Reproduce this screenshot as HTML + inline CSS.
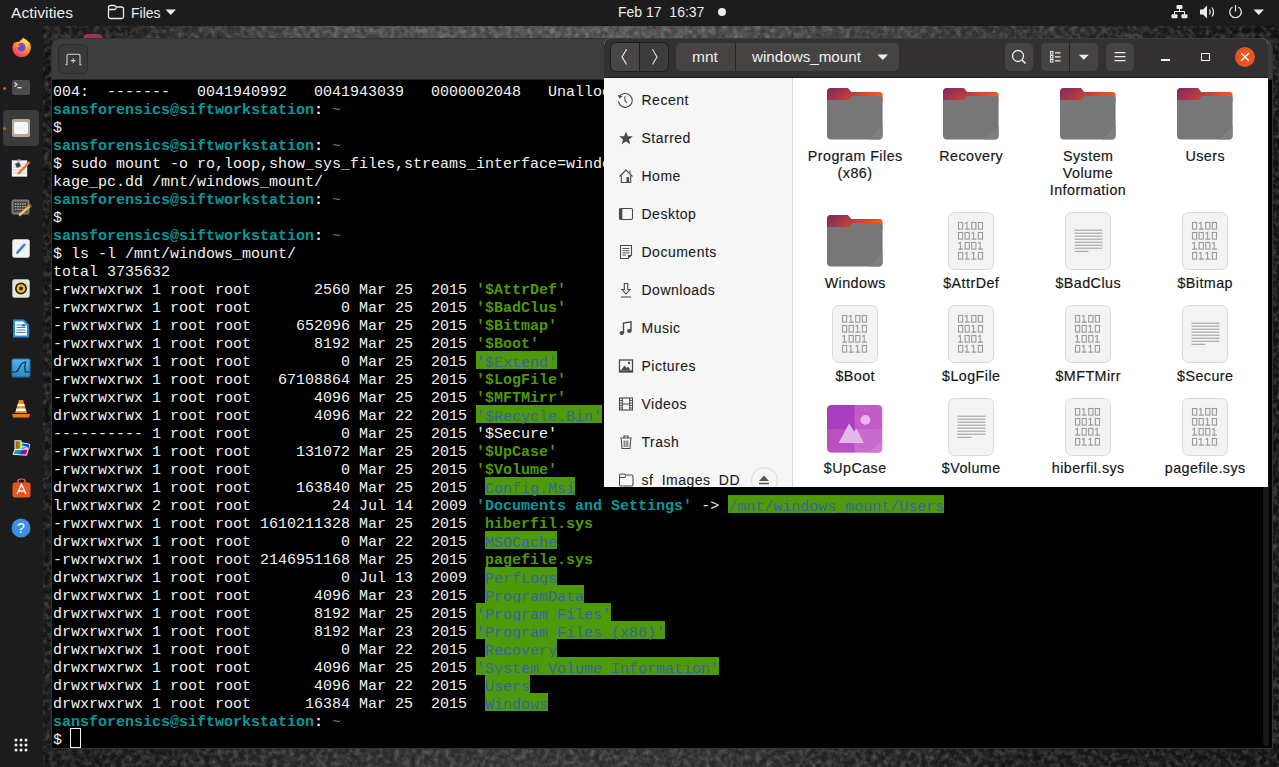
<!DOCTYPE html>
<html><head><meta charset="utf-8">
<style>
*{margin:0;padding:0;box-sizing:border-box}
html,body{width:1279px;height:767px;overflow:hidden;background:#1a1a1a;font-family:"Liberation Sans",sans-serif}
.abs{position:absolute}
#wall{left:0;top:0;width:1279px;height:767px;background:#1a1a1a}
#topbar{left:0;top:0;width:1279px;height:26px;background:#1c1c1c;color:#ececec;font-size:14.5px}
#dock{left:0;top:26px;width:43px;height:741px;background:#1c1c1c}
#term{left:52px;top:39px;width:1220px;height:709px;background:#000;border-radius:7px 7px 0 0;overflow:hidden;box-shadow:0 0 0 1px #333}
#thead{left:0;top:0;width:1220px;height:41px;background:#3d3d3d;border-bottom:1px solid #252525}
#tbody{left:0;top:41px;width:1220px;height:668px;background:#000}
pre{font-family:"Liberation Mono",monospace;font-size:15px;line-height:18px;color:#f2f2f2;white-space:pre}
.c{color:#06989a;font-weight:bold}
.w{color:#f2f2f2;font-weight:bold}
.g{color:#4e9a06;font-weight:bold}
.gt{color:#4e9a06}
.h{color:#3465a4;background:linear-gradient(#4e9a06,#4e9a06) no-repeat 0 0/100% 18px;padding-top:3.5px}
#files{left:604px;top:38px;width:664px;height:449px;border-radius:7px 7px 0 0;overflow:hidden;background:#fff}
#fhead{left:0;top:0;width:664px;height:40px;background:#323030;border-bottom:1px solid #1c1a1a;box-shadow:inset 0 1px 0 #3e3c3c}
#side{left:0;top:40px;width:189px;height:409px;background:#f6f6f6;border-right:1px solid #d8d8d8}
.lbl{position:absolute;width:120px;text-align:center;font-size:14.3px;line-height:17px;color:#161616;letter-spacing:0.45px;text-indent:0.45px;-webkit-text-stroke:0.18px #161616}
.btn{position:absolute;background:#464544;border-radius:5px}
</style></head><body>
<div id="wall" class="abs">
  <div class="abs" style="left:0;top:26px;width:1279px;height:14px;background:linear-gradient(90deg,#1a1a1a 0px,#1c1c1c 110px,#333 190px,#4a4a4a 300px,#525252 450px,#555 650px,#4a4a4a 800px,#3a3a3a 950px,#2c2c2c 1080px,#1c1c1c 1180px,#121212 1279px)"></div>
  <div class="abs" style="left:0;top:40px;width:1279px;height:727px;background:linear-gradient(180deg,#131313 0%,#161616 60%,#1a1a1a 100%)"></div>
  <div class="abs" style="left:0;top:744px;width:1279px;height:23px;background:linear-gradient(90deg,#161616 0px,#1d1d1d 150px,#2c2c2c 300px,#353535 480px,#333 700px,#262626 850px,#1c1c1c 1000px,#141414 1279px)"></div>
  <div class="abs" style="left:1268px;top:40px;width:11px;height:710px;background:#151515"></div>
  <svg class="abs" style="left:0;top:0" width="1279" height="767"><filter id="nz" x="0" y="0" width="100%" height="100%"><feTurbulence type="fractalNoise" baseFrequency="0.18" numOctaves="3" seed="3"/><feColorMatrix values="0 0 0 0 1  0 0 0 0 1  0 0 0 0 1  0 0 0 0.45 -0.17"/></filter><filter id="nz2" x="0" y="0" width="100%" height="100%"><feTurbulence type="fractalNoise" baseFrequency="0.2" numOctaves="2" seed="9"/><feColorMatrix values="0 0 0 0 0  0 0 0 0 0  0 0 0 0 0  0 0 0 0.6 -0.22"/></filter><rect width="1279" height="767" filter="url(#nz)"/><rect width="1279" height="767" filter="url(#nz2)"/></svg>
</div>
<div class="abs" style="left:83px;top:34px;width:20px;height:8px;border-radius:5px 5px 0 0;background:#a2324e"></div>
<div id="topbar" class="abs">
  <div class="abs" style="left:11px;top:4px;font-size:15.5px;letter-spacing:0.1px">Activities</div>
  <svg class="abs" style="left:107px;top:4px" width="18" height="16" viewBox="0 0 18 16"><path d="M1.5 3.5 Q1.5 1.5 3.5 1.5 H7 Q8.5 1.5 9 3 H14.5 Q16.5 3 16.5 5 V13 Q16.5 14.5 14.5 14.5 H3.5 Q1.5 14.5 1.5 12.5 Z M1.5 5.5 H7.5 Q9 5.5 9 4" fill="none" stroke="#ececec" stroke-width="1.3"/></svg>
  <div class="abs" style="left:131px;top:5px;font-size:14px">Files</div>
  <svg class="abs" style="left:165px;top:9px" width="12" height="7" viewBox="0 0 12 7"><path d="M0.5 0.5 H11 L5.75 6 Z" fill="#ececec"/></svg>
  <div class="abs" style="left:618px;top:4px;font-size:14px;white-space:pre">Feb 17  16:37</div>
  <div class="abs" style="left:718px;top:8px;width:8px;height:8px;border-radius:50%;background:#ececec"></div>
  <svg class="abs" style="left:1171px;top:5px" width="17" height="14" viewBox="0 0 17 14"><rect x="5.5" y="0" width="6" height="4" rx="1" fill="#ececec"/><rect x="0.5" y="9.3" width="6" height="4" rx="1" fill="#ececec"/><rect x="10.5" y="9.3" width="6" height="4" rx="1" fill="#ececec"/><path d="M8.5 4 V6.5 M3.5 9.5 V6.5 H13.5 V9.5" fill="none" stroke="#ececec" stroke-width="1"/></svg>
  <svg class="abs" style="left:1200px;top:5px" width="16" height="14" viewBox="0 0 16 14"><path d="M0 4.5 H3 L7 0.5 V13.5 L3 9.5 H0 Z" fill="#ececec"/><path d="M9.5 4.5 Q11 7 9.5 9.5 M12 2.5 Q15 7 12 11.5" fill="none" stroke="#ececec" stroke-width="1.2"/></svg>
  <svg class="abs" style="left:1228px;top:4px" width="15" height="15" viewBox="0 0 15 15"><path d="M4.5 3 A5.8 5.8 0 1 0 10.5 3" fill="none" stroke="#ececec" stroke-width="1.2"/><path d="M7.5 1 V7.5" stroke="#ececec" stroke-width="1.2"/></svg>
  <svg class="abs" style="left:1253px;top:9px" width="12" height="7" viewBox="0 0 12 7"><path d="M0.5 0.5 H11 L5.75 6 Z" fill="#ececec"/></svg>
</div>
<div id="dock" class="abs">
  <svg class="abs" style="left:11px;top:11px" width="21" height="21" viewBox="0 0 21 21">
    <defs><radialGradient id="ff" cx="0.7" cy="0.2" r="1"><stop offset="0" stop-color="#ffe84a"/><stop offset="0.45" stop-color="#ff9a1f"/><stop offset="0.8" stop-color="#ff3a5c"/><stop offset="1" stop-color="#e0208a"/></radialGradient></defs>
    <path d="M10.5 20.2 A9.3 9.3 0 0 1 1.5 9 Q2.5 6 4 4.5 L4.5 6 Q6 4 7.5 5 Q9.5 3.5 11 2 Q12 1 12 0.5 Q16 3 19 6 Q20.5 10 19.5 13 A9.3 9.3 0 0 1 10.5 20.2 Z" fill="url(#ff)"/>
    <circle cx="10.5" cy="10.5" r="4" fill="#6a4ae0"/><path d="M7 8 Q9 5 12 6 Q14 7 13.5 9" fill="#a23ae0"/>
    <path d="M4 6 Q6 8 9 9 Q8 10.5 6 10 Q4.5 9 4 6Z" fill="#ff9a1f"/>
  </svg>
  <div class="abs" style="left:3px;top:61px;width:3px;height:3px;border-radius:50%;background:#e95420"></div>
  <div class="abs" style="left:12px;top:54px;width:18px;height:15px;border-radius:2px;background:#4b4b4b"></div>
  <svg class="abs" style="left:12px;top:54px" width="18" height="15" viewBox="0 0 18 15"><path d="M2.5 2.5 L5 4.5 L2.5 6.5" fill="none" stroke="#eee" stroke-width="1.1"/><path d="M5.5 7.7 H9.5" stroke="#eee" stroke-width="1.3"/></svg>
  <div class="abs" style="left:3px;top:84px;width:36px;height:36px;border-radius:4px;background:#3c3c3c"></div>
  <div class="abs" style="left:3px;top:101px;width:3px;height:3px;border-radius:50%;background:#e95420"></div>
  <div class="abs" style="left:12px;top:93px;width:18px;height:18px;border-radius:2px;background:#b5ab97"></div>
  <div class="abs" style="left:14px;top:96px;width:14px;height:12px;border-radius:2px;background:#f6f6f4"></div>
  <!-- notes -->
  <svg class="abs" style="left:11px;top:133px" width="20" height="19" viewBox="0 0 20 19"><rect x="1" y="1.5" width="15" height="16" fill="#f8f8ff" stroke="#ccc" stroke-width="0.5"/><path d="M2 5 H15 M2 8 H15 M2 11 H15 M2 14 H15" stroke="#b8b8f0" stroke-width="0.8"/><rect x="6" y="0.5" width="4" height="2" fill="#aaa"/><path d="M4 5 L8 3 L10 7 L6 9Z" fill="#444"/><path d="M7 15 L18.5 3" stroke="#f07a1a" stroke-width="2.5"/></svg>
  <!-- keyboard pencil -->
  <svg class="abs" style="left:11px;top:173px" width="21" height="18" viewBox="0 0 21 18"><rect x="1" y="1" width="17" height="14" rx="1.5" fill="#6a6864" stroke="#9a9894" stroke-width="0.8"/><rect x="2.8" y="3" width="13.4" height="9.5" fill="#3a3936"/><path d="M3.8 5 H15 M3.8 7.7 H15 M3.8 10.4 H15" stroke="#b9b7b0" stroke-width="1.3" stroke-dasharray="1.6 0.8"/><path d="M8 16.5 L19.5 6.5" stroke="#e8c44a" stroke-width="2.5"/><path d="M18.5 7.5 L20 6" stroke="#d44" stroke-width="2.5"/></svg>
  <!-- text editor -->
  <svg class="abs" style="left:12px;top:213px" width="18" height="19" viewBox="0 0 18 19"><rect x="0.5" y="0.5" width="17" height="18" rx="2" fill="#f4f4f4" stroke="#ddd" stroke-width="0.6"/><path d="M5 14 L13 5" stroke="#3b78e7" stroke-width="2.6"/><path d="M4 15.3 L5.2 13.3 L6.2 14.3Z" fill="#555"/></svg>
  <!-- rhythmbox -->
  <svg class="abs" style="left:12px;top:253px" width="18" height="19" viewBox="0 0 18 19"><rect x="0.5" y="0.5" width="17" height="18" rx="2" fill="#e8e4d8" stroke="#c9c4b4" stroke-width="0.6"/><circle cx="9" cy="9.5" r="6" fill="#222"/><circle cx="9" cy="9.5" r="4.3" fill="#f2c21a"/><circle cx="9" cy="9.5" r="2" fill="#222"/></svg>
  <!-- libreoffice writer -->
  <svg class="abs" style="left:12px;top:293px" width="18" height="19" viewBox="0 0 18 19"><path d="M1 0.5 H12 L17 5.5 V18.5 H1Z" fill="#2a8ad4"/><path d="M3 2.5 H11 L15 6.5 V16.5 H3Z" fill="#fff"/><path d="M4.5 6 H9 M4.5 8.5 H13.5 M4.5 11 H13.5 M4.5 13.5 H13.5" stroke="#2a8ad4" stroke-width="1"/><rect x="9.5" y="5" width="4" height="2.5" fill="#2a8ad4"/></svg>
  <!-- wireshark -->
  <svg class="abs" style="left:11px;top:332px" width="20" height="20" viewBox="0 0 20 20"><defs><linearGradient id="ws" x1="0" y1="0" x2="0" y2="1"><stop offset="0" stop-color="#5ab4ea"/><stop offset="1" stop-color="#2a86c8"/></linearGradient></defs><rect x="0.8" y="0.8" width="18.4" height="18.4" rx="1.5" fill="url(#ws)" stroke="#16507a" stroke-width="1"/><path d="M1 14 H4.5 Q6.5 14 8.3 9.5 Q10.5 4.3 14.5 4 Q13.3 8.5 14.3 14 H19" fill="none" stroke="#0f2a40" stroke-width="1.2"/></svg>
  <!-- vlc -->
  <svg class="abs" style="left:11px;top:373px" width="20" height="19" viewBox="0 0 20 19"><path d="M8 1 H12 L16 14 H4Z" fill="#f88a14"/><path d="M6.8 5 H13.2 L13.9 7.3 H6.1Z M5.6 9.5 H14.4 L15.2 12 H4.8Z" fill="#fff"/><path d="M1 15 H19 L18 18.5 H2Z" fill="#f07a10"/></svg>
  <!-- colorful -->
  <svg class="abs" style="left:8px;top:410px" width="28" height="24" viewBox="0 0 28 24"><defs><linearGradient id="rb1" x1="0" y1="0" x2="1" y2="0"><stop offset="0" stop-color="#ff2a00"/><stop offset="1" stop-color="#20e020"/></linearGradient><linearGradient id="rb2" x1="0" y1="0" x2="1" y2="0.3"><stop offset="0" stop-color="#10e020"/><stop offset="0.5" stop-color="#1090c0"/><stop offset="0.75" stop-color="#6010e0"/><stop offset="1" stop-color="#ff1040"/></linearGradient><linearGradient id="rb3" x1="0" y1="0" x2="1" y2="0"><stop offset="0" stop-color="#20d020"/><stop offset="0.5" stop-color="#1040ff"/><stop offset="1" stop-color="#2010ff"/></linearGradient></defs>
  <path d="M13 6.5 L21.8 8.3 L20.8 13 L13 11.6Z" fill="url(#rb3)" stroke="#eee" stroke-width="0.9"/><path d="M13.5 10 L19.5 11.3" stroke="#ddd" stroke-width="1.2"/>
  <rect x="7" y="4.8" width="6" height="8.6" fill="url(#rb1)" stroke="#f4f4f4" stroke-width="1"/>
  <path d="M5 18.3 L6.8 13.6 L20.2 13.1 L18.6 19.2Z" fill="url(#rb2)" stroke="#f4f4f4" stroke-width="1"/></svg>
  <!-- software -->
  <svg class="abs" style="left:12px;top:452px" width="19" height="20" viewBox="0 0 19 20"><path d="M6 5 V3 Q6 1 9.5 1 Q13 1 13 3 V5" fill="none" stroke="#f08050" stroke-width="1.2"/><rect x="0.5" y="4.5" width="18" height="15" rx="2" fill="#e95420"/><path d="M5 16 L9.5 6.5 L14 16 M6.5 13 H12.5" fill="none" stroke="#fff" stroke-width="1.4"/></svg>
  <!-- help -->
  <svg class="abs" style="left:11px;top:492px" width="20" height="20" viewBox="0 0 20 20"><circle cx="10" cy="10" r="9.5" fill="#3d8fe0"/><text x="10" y="15" text-anchor="middle" font-family="Liberation Sans" font-size="14" fill="#fff">?</text></svg>
  <!-- apps grid -->
  <svg class="abs" style="left:14px;top:712px" width="14" height="14" viewBox="0 0 14 14" fill="#eee"><circle cx="2" cy="2" r="1.5"/><circle cx="7" cy="2" r="1.5"/><circle cx="12" cy="2" r="1.5"/><circle cx="2" cy="7" r="1.5"/><circle cx="7" cy="7" r="1.5"/><circle cx="12" cy="7" r="1.5"/><circle cx="2" cy="12" r="1.5"/><circle cx="7" cy="12" r="1.5"/><circle cx="12" cy="12" r="1.5"/></svg>
</div>
<div id="term" class="abs">
  <div id="thead" class="abs">
    <div class="abs" style="left:6px;top:5px;width:30px;height:30px;border-radius:6px;background:#393939;border:1px solid #2b2b2b"></div>
    <svg class="abs" style="left:6px;top:5px" width="29" height="29" viewBox="0 0 29 29"><path d="M7.5 20.7 H9 V11.8 Q9 10.2 10.6 10.2 H20.4 Q22 10.2 22 11.8 V20.7 H23.5" fill="none" stroke="#cfcfcf" stroke-width="1.1"/><path d="M15.3 14.3 V18.9 M13 16.6 H17.6" stroke="#cfcfcf" stroke-width="1.1"/></svg>
  </div>
  <div id="tbody" class="abs">
<div class="abs" style="left:1211px;top:2px;width:6px;height:664px;border-radius:3px;background:#171717"></div>
<pre class="abs" style="left:1px;top:4px">004:  -------   0041940992   0041943039   0000002048   Unallocated
<span class="c">sansforensics@siftworkstation</span><span class="w">:</span> <span class="gt">~</span>
$
<span class="c">sansforensics@siftworkstation</span><span class="w">:</span> <span class="gt">~</span>
$ sudo mount -o ro,loop,show_sys_files,streams_interface=windows /cases/hac
kage_pc.dd /mnt/windows_mount/
<span class="c">sansforensics@siftworkstation</span><span class="w">:</span> <span class="gt">~</span>
$
<span class="c">sansforensics@siftworkstation</span><span class="w">:</span> <span class="gt">~</span>
$ ls -l /mnt/windows_mount/
total 3735632
-rwxrwxrwx 1 root root       2560 Mar 25  2015 <span class="g">'$AttrDef'</span>
-rwxrwxrwx 1 root root          0 Mar 25  2015 <span class="g">'$BadClus'</span>
-rwxrwxrwx 1 root root     652096 Mar 25  2015 <span class="g">'$Bitmap'</span>
-rwxrwxrwx 1 root root       8192 Mar 25  2015 <span class="g">'$Boot'</span>
drwxrwxrwx 1 root root          0 Mar 25  2015 <span class="h">'$Extend'</span>
-rwxrwxrwx 1 root root   67108864 Mar 25  2015 <span class="g">'$LogFile'</span>
-rwxrwxrwx 1 root root       4096 Mar 25  2015 <span class="g">'$MFTMirr'</span>
drwxrwxrwx 1 root root       4096 Mar 22  2015 <span class="h">'$Recycle.Bin'</span>
---------- 1 root root          0 Mar 25  2015 '$Secure'
-rwxrwxrwx 1 root root     131072 Mar 25  2015 <span class="g">'$UpCase'</span>
-rwxrwxrwx 1 root root          0 Mar 25  2015 <span class="g">'$Volume'</span>
drwxrwxrwx 1 root root     163840 Mar 25  2015  <span class="h">Config.Msi</span>
lrwxrwxrwx 2 root root         24 Jul 14  2009 <span class="c">'Documents and Settings'</span> -&gt; <span class="h">/mnt/windows_mount/Users</span>
-rwxrwxrwx 1 root root 1610211328 Mar 25  2015  <span class="g">hiberfil.sys</span>
drwxrwxrwx 1 root root          0 Mar 22  2015  <span class="h">MSOCache</span>
-rwxrwxrwx 1 root root 2146951168 Mar 25  2015  <span class="g">pagefile.sys</span>
drwxrwxrwx 1 root root          0 Jul 13  2009  <span class="h">PerfLogs</span>
drwxrwxrwx 1 root root       4096 Mar 23  2015  <span class="h">ProgramData</span>
drwxrwxrwx 1 root root       8192 Mar 25  2015 <span class="h">'Program Files'</span>
drwxrwxrwx 1 root root       8192 Mar 23  2015 <span class="h">'Program Files (x86)'</span>
drwxrwxrwx 1 root root          0 Mar 22  2015  <span class="h">Recovery</span>
drwxrwxrwx 1 root root       4096 Mar 25  2015 <span class="h">'System Volume Information'</span>
drwxrwxrwx 1 root root       4096 Mar 22  2015  <span class="h">Users</span>
drwxrwxrwx 1 root root      16384 Mar 25  2015  <span class="h">Windows</span>
<span class="c">sansforensics@siftworkstation</span><span class="w">:</span> <span class="gt">~</span>
$ </pre>
<div class="abs" style="left:18px;top:648px;width:11px;height:20px;border:1.5px solid #f4f4f4"></div>
  </div>
</div>
<div id="files" class="abs">
  <div id="fhead" class="abs">
    <div class="abs" style="left:6px;top:4px;width:59px;height:30px;border-radius:6px;background:#1f1e1e"></div>
    <div class="abs" style="left:7px;top:5px;width:28px;height:28px;border-radius:5px 0 0 5px;background:#494746"></div>
    <div class="abs" style="left:36px;top:5px;width:28px;height:28px;border-radius:0 5px 5px 0;background:#3d3b3b"></div>
    <svg class="abs" style="left:7px;top:5px" width="57" height="28" viewBox="0 0 57 28"><path d="M15.6 6.3 L11 13.9 L15.6 21.5" fill="none" stroke="#eee" stroke-width="1.1"/><path d="M41.5 6.3 L46 13.9 L41.5 21.5" fill="none" stroke="#ddd" stroke-width="1.1"/></svg>
    <div class="abs" style="left:131px;top:5px;width:1px;height:28px;background:#262424"></div>
    <div class="abs" style="left:72px;top:5px;width:59px;height:28px;border-radius:5px 0 0 5px;background:#464443"></div>
    <div class="abs" style="left:132px;top:5px;width:163px;height:28px;border-radius:0 5px 5px 0;background:#464443"></div>
    <div class="abs" style="left:88px;top:10px;font-size:15.5px;color:#f0f0f0">mnt</div>
    <div class="abs" style="left:148px;top:10px;font-size:15.2px;color:#f0f0f0">windows_mount</div>
    <svg class="abs" style="left:273px;top:16px" width="12" height="7" viewBox="0 0 12 7"><path d="M0.5 0.5 H11 L5.75 6 Z" fill="#eee"/></svg>
    
    <div class="abs" style="left:401px;top:5px;width:28px;height:28px;border-radius:5px;background:#464443"></div>
    <svg class="abs" style="left:401px;top:5px" width="28" height="28" viewBox="0 0 28 28"><circle cx="13" cy="13" r="5.5" fill="none" stroke="#eee" stroke-width="1.3"/><path d="M17 17 L20.5 20.5" stroke="#eee" stroke-width="1.6"/></svg>
    
    <div class="abs" style="left:437px;top:5px;width:28px;height:28px;border-radius:5px 0 0 5px;background:#464443"></div>
    <div class="abs" style="left:466px;top:5px;width:28px;height:28px;border-radius:0 5px 5px 0;background:#464443"></div><div class="abs" style="left:465px;top:5px;width:1px;height:28px;background:#262424"></div>
    <svg class="abs" style="left:437px;top:5px" width="57" height="28" viewBox="0 0 57 28"><rect x="9.5" y="8.5" width="2.5" height="2.5" fill="none" stroke="#eee" stroke-width="1"/><rect x="9.5" y="12.5" width="2.5" height="2.5" fill="none" stroke="#eee" stroke-width="1"/><rect x="9.5" y="16.5" width="2.5" height="2.5" fill="none" stroke="#eee" stroke-width="1"/><path d="M14 9.8 H19.5 M14 13.8 H19.5 M14 17.8 H19.5" stroke="#eee" stroke-width="1.2"/><path d="M37.8 11.8 H47.8 L42.8 16.8Z" fill="#eee"/></svg>
    
    <div class="abs" style="left:502px;top:5px;width:28px;height:28px;border-radius:5px;background:#464443"></div>
    <svg class="abs" style="left:502px;top:5px" width="28" height="28" viewBox="0 0 28 28"><path d="M8.5 9.6 H19.5 M8.5 13.6 H19.5 M8.5 17.6 H19.5" stroke="#eee" stroke-width="1.2"/></svg>
    <div class="abs" style="left:557px;top:20.5px;width:8.5px;height:2px;background:#f2f2f2"></div>
    <div class="abs" style="left:597px;top:14.7px;width:8.5px;height:8.5px;border:1.3px solid #f2f2f2"></div>
    <div class="abs" style="left:631px;top:9px;width:20px;height:20px;border-radius:50%;background:#e95420"></div>
    <svg class="abs" style="left:631px;top:9px" width="20" height="20" viewBox="0 0 20 20"><path d="M6.2 6.2 L13.8 13.8 M13.8 6.2 L6.2 13.8" stroke="#fff" stroke-width="1.4"/></svg>
  </div>
  <div id="grid">
<svg width="0" height="0" style="position:absolute"><defs><linearGradient id="fg" x1="0" y1="0" x2="1" y2="0.35"><stop offset="0" stop-color="#7a2a62"/><stop offset="0.45" stop-color="#b13a45"/><stop offset="1" stop-color="#ee5a1e"/></linearGradient></defs></svg>
<svg class="abs" style="left:223.0px;top:50.0px" width="57" height="53" viewBox="0 0 57 53"><path d="M0 3.5 Q0 0 3.5 0 H21 L24.3 3.9 H52.3 Q55.6 3.9 55.6 7.2 V14 H0 Z" fill="url(#fg)"/><path d="M0 12 H22 L24.7 8.1 H52.6 Q55.6 8.1 55.6 11.1 V47.5 Q55.6 51.5 51.6 51.5 H4 Q0 51.5 0 47.5 Z" fill="#777"/><path d="M55.6 38 V47.5 Q55.6 51.5 51.6 51.5 H42Z" fill="#7f7f7f"/></svg>
<div class="lbl" style="left:191.0px;top:110.3px">Program Files<br>(x86)</div>
<svg class="abs" style="left:339.0px;top:50.0px" width="57" height="53" viewBox="0 0 57 53"><path d="M0 3.5 Q0 0 3.5 0 H21 L24.3 3.9 H52.3 Q55.6 3.9 55.6 7.2 V14 H0 Z" fill="url(#fg)"/><path d="M0 12 H22 L24.7 8.1 H52.6 Q55.6 8.1 55.6 11.1 V47.5 Q55.6 51.5 51.6 51.5 H4 Q0 51.5 0 47.5 Z" fill="#777"/><path d="M55.6 38 V47.5 Q55.6 51.5 51.6 51.5 H42Z" fill="#7f7f7f"/></svg>
<div class="lbl" style="left:307.0px;top:110.3px">Recovery</div>
<svg class="abs" style="left:456.0px;top:50.0px" width="57" height="53" viewBox="0 0 57 53"><path d="M0 3.5 Q0 0 3.5 0 H21 L24.3 3.9 H52.3 Q55.6 3.9 55.6 7.2 V14 H0 Z" fill="url(#fg)"/><path d="M0 12 H22 L24.7 8.1 H52.6 Q55.6 8.1 55.6 11.1 V47.5 Q55.6 51.5 51.6 51.5 H4 Q0 51.5 0 47.5 Z" fill="#777"/><path d="M55.6 38 V47.5 Q55.6 51.5 51.6 51.5 H42Z" fill="#7f7f7f"/></svg>
<div class="lbl" style="left:424.0px;top:110.3px">System<br>Volume<br>Information</div>
<svg class="abs" style="left:573.0px;top:50.0px" width="57" height="53" viewBox="0 0 57 53"><path d="M0 3.5 Q0 0 3.5 0 H21 L24.3 3.9 H52.3 Q55.6 3.9 55.6 7.2 V14 H0 Z" fill="url(#fg)"/><path d="M0 12 H22 L24.7 8.1 H52.6 Q55.6 8.1 55.6 11.1 V47.5 Q55.6 51.5 51.6 51.5 H4 Q0 51.5 0 47.5 Z" fill="#777"/><path d="M55.6 38 V47.5 Q55.6 51.5 51.6 51.5 H42Z" fill="#7f7f7f"/></svg>
<div class="lbl" style="left:541.0px;top:110.3px">Users</div>
<svg class="abs" style="left:223.0px;top:176.9px" width="57" height="53" viewBox="0 0 57 53"><path d="M0 3.5 Q0 0 3.5 0 H21 L24.3 3.9 H52.3 Q55.6 3.9 55.6 7.2 V14 H0 Z" fill="url(#fg)"/><path d="M0 12 H22 L24.7 8.1 H52.6 Q55.6 8.1 55.6 11.1 V47.5 Q55.6 51.5 51.6 51.5 H4 Q0 51.5 0 47.5 Z" fill="#777"/><path d="M55.6 38 V47.5 Q55.6 51.5 51.6 51.5 H42Z" fill="#7f7f7f"/></svg>
<div class="lbl" style="left:191.0px;top:237.2px">Windows</div>
<svg class="abs" style="left:344.4px;top:174.1px" width="46" height="58" viewBox="0 0 46 58"><rect x="0.5" y="0.5" width="45" height="57" rx="6" fill="#f3f3f3" stroke="#d9d9d9"/><rect x="10.5" y="10.5" width="4.2" height="6.6" fill="none" stroke="#9a9a9a" stroke-width="1.1"/><path d="M16.9 11.6 L19.0 10.5 V17.1 M16.9 17.1 H21.8" fill="none" stroke="#9a9a9a" stroke-width="1.1"/><rect x="23.7" y="10.5" width="4.2" height="6.6" fill="none" stroke="#9a9a9a" stroke-width="1.1"/><rect x="30.3" y="10.5" width="4.2" height="6.6" fill="none" stroke="#9a9a9a" stroke-width="1.1"/><rect x="10.5" y="20.5" width="4.2" height="6.6" fill="none" stroke="#9a9a9a" stroke-width="1.1"/><rect x="17.1" y="20.5" width="4.2" height="6.6" fill="none" stroke="#9a9a9a" stroke-width="1.1"/><path d="M23.5 21.6 L25.6 20.5 V27.1 M23.5 27.1 H28.4" fill="none" stroke="#9a9a9a" stroke-width="1.1"/><rect x="30.3" y="20.5" width="4.2" height="6.6" fill="none" stroke="#9a9a9a" stroke-width="1.1"/><path d="M10.3 31.6 L12.4 30.5 V37.1 M10.3 37.1 H15.2" fill="none" stroke="#9a9a9a" stroke-width="1.1"/><rect x="17.1" y="30.5" width="4.2" height="6.6" fill="none" stroke="#9a9a9a" stroke-width="1.1"/><rect x="23.7" y="30.5" width="4.2" height="6.6" fill="none" stroke="#9a9a9a" stroke-width="1.1"/><path d="M30.1 31.6 L32.2 30.5 V37.1 M30.1 37.1 H35.0" fill="none" stroke="#9a9a9a" stroke-width="1.1"/><rect x="10.5" y="40.5" width="4.2" height="6.6" fill="none" stroke="#9a9a9a" stroke-width="1.1"/><path d="M16.9 41.6 L19.0 40.5 V47.1 M16.9 47.1 H21.8" fill="none" stroke="#9a9a9a" stroke-width="1.1"/><path d="M23.5 41.6 L25.6 40.5 V47.1 M23.5 47.1 H28.4" fill="none" stroke="#9a9a9a" stroke-width="1.1"/><rect x="30.3" y="40.5" width="4.2" height="6.6" fill="none" stroke="#9a9a9a" stroke-width="1.1"/></svg>
<div class="lbl" style="left:307.0px;top:237.2px">$AttrDef</div>
<svg class="abs" style="left:461.4px;top:174.1px" width="46" height="58" viewBox="0 0 46 58"><rect x="0.5" y="0.5" width="45" height="57" rx="6" fill="#f3f3f3" stroke="#d9d9d9"/><path d="M9.5 18.2 H37.5" stroke="#9c9c9c" stroke-width="1"/><path d="M9.5 21.2 H37.5" stroke="#9c9c9c" stroke-width="1"/><path d="M9.5 24.2 H37.5" stroke="#9c9c9c" stroke-width="1"/><path d="M9.5 27.2 H37.5" stroke="#9c9c9c" stroke-width="1"/><path d="M9.5 30.2 H37.5" stroke="#9c9c9c" stroke-width="1"/><path d="M9.5 33.2 H37.5" stroke="#9c9c9c" stroke-width="1"/><path d="M9.5 36.2 H37.5" stroke="#9c9c9c" stroke-width="1"/><path d="M9.5 39.3 H23.5" stroke="#9c9c9c" stroke-width="1"/></svg>
<div class="lbl" style="left:424.0px;top:237.2px">$BadClus</div>
<svg class="abs" style="left:578.4px;top:174.1px" width="46" height="58" viewBox="0 0 46 58"><rect x="0.5" y="0.5" width="45" height="57" rx="6" fill="#f3f3f3" stroke="#d9d9d9"/><rect x="10.5" y="10.5" width="4.2" height="6.6" fill="none" stroke="#9a9a9a" stroke-width="1.1"/><path d="M16.9 11.6 L19.0 10.5 V17.1 M16.9 17.1 H21.8" fill="none" stroke="#9a9a9a" stroke-width="1.1"/><rect x="23.7" y="10.5" width="4.2" height="6.6" fill="none" stroke="#9a9a9a" stroke-width="1.1"/><rect x="30.3" y="10.5" width="4.2" height="6.6" fill="none" stroke="#9a9a9a" stroke-width="1.1"/><rect x="10.5" y="20.5" width="4.2" height="6.6" fill="none" stroke="#9a9a9a" stroke-width="1.1"/><rect x="17.1" y="20.5" width="4.2" height="6.6" fill="none" stroke="#9a9a9a" stroke-width="1.1"/><path d="M23.5 21.6 L25.6 20.5 V27.1 M23.5 27.1 H28.4" fill="none" stroke="#9a9a9a" stroke-width="1.1"/><rect x="30.3" y="20.5" width="4.2" height="6.6" fill="none" stroke="#9a9a9a" stroke-width="1.1"/><path d="M10.3 31.6 L12.4 30.5 V37.1 M10.3 37.1 H15.2" fill="none" stroke="#9a9a9a" stroke-width="1.1"/><rect x="17.1" y="30.5" width="4.2" height="6.6" fill="none" stroke="#9a9a9a" stroke-width="1.1"/><rect x="23.7" y="30.5" width="4.2" height="6.6" fill="none" stroke="#9a9a9a" stroke-width="1.1"/><path d="M30.1 31.6 L32.2 30.5 V37.1 M30.1 37.1 H35.0" fill="none" stroke="#9a9a9a" stroke-width="1.1"/><rect x="10.5" y="40.5" width="4.2" height="6.6" fill="none" stroke="#9a9a9a" stroke-width="1.1"/><path d="M16.9 41.6 L19.0 40.5 V47.1 M16.9 47.1 H21.8" fill="none" stroke="#9a9a9a" stroke-width="1.1"/><path d="M23.5 41.6 L25.6 40.5 V47.1 M23.5 47.1 H28.4" fill="none" stroke="#9a9a9a" stroke-width="1.1"/><rect x="30.3" y="40.5" width="4.2" height="6.6" fill="none" stroke="#9a9a9a" stroke-width="1.1"/></svg>
<div class="lbl" style="left:541.0px;top:237.2px">$Bitmap</div>
<svg class="abs" style="left:228.4px;top:267.3px" width="46" height="58" viewBox="0 0 46 58"><rect x="0.5" y="0.5" width="45" height="57" rx="6" fill="#f3f3f3" stroke="#d9d9d9"/><rect x="10.5" y="10.5" width="4.2" height="6.6" fill="none" stroke="#9a9a9a" stroke-width="1.1"/><path d="M16.9 11.6 L19.0 10.5 V17.1 M16.9 17.1 H21.8" fill="none" stroke="#9a9a9a" stroke-width="1.1"/><rect x="23.7" y="10.5" width="4.2" height="6.6" fill="none" stroke="#9a9a9a" stroke-width="1.1"/><rect x="30.3" y="10.5" width="4.2" height="6.6" fill="none" stroke="#9a9a9a" stroke-width="1.1"/><rect x="10.5" y="20.5" width="4.2" height="6.6" fill="none" stroke="#9a9a9a" stroke-width="1.1"/><rect x="17.1" y="20.5" width="4.2" height="6.6" fill="none" stroke="#9a9a9a" stroke-width="1.1"/><path d="M23.5 21.6 L25.6 20.5 V27.1 M23.5 27.1 H28.4" fill="none" stroke="#9a9a9a" stroke-width="1.1"/><rect x="30.3" y="20.5" width="4.2" height="6.6" fill="none" stroke="#9a9a9a" stroke-width="1.1"/><path d="M10.3 31.6 L12.4 30.5 V37.1 M10.3 37.1 H15.2" fill="none" stroke="#9a9a9a" stroke-width="1.1"/><rect x="17.1" y="30.5" width="4.2" height="6.6" fill="none" stroke="#9a9a9a" stroke-width="1.1"/><rect x="23.7" y="30.5" width="4.2" height="6.6" fill="none" stroke="#9a9a9a" stroke-width="1.1"/><path d="M30.1 31.6 L32.2 30.5 V37.1 M30.1 37.1 H35.0" fill="none" stroke="#9a9a9a" stroke-width="1.1"/><rect x="10.5" y="40.5" width="4.2" height="6.6" fill="none" stroke="#9a9a9a" stroke-width="1.1"/><path d="M16.9 41.6 L19.0 40.5 V47.1 M16.9 47.1 H21.8" fill="none" stroke="#9a9a9a" stroke-width="1.1"/><path d="M23.5 41.6 L25.6 40.5 V47.1 M23.5 47.1 H28.4" fill="none" stroke="#9a9a9a" stroke-width="1.1"/><rect x="30.3" y="40.5" width="4.2" height="6.6" fill="none" stroke="#9a9a9a" stroke-width="1.1"/></svg>
<div class="lbl" style="left:191.0px;top:330.4px">$Boot</div>
<svg class="abs" style="left:344.4px;top:267.3px" width="46" height="58" viewBox="0 0 46 58"><rect x="0.5" y="0.5" width="45" height="57" rx="6" fill="#f3f3f3" stroke="#d9d9d9"/><rect x="10.5" y="10.5" width="4.2" height="6.6" fill="none" stroke="#9a9a9a" stroke-width="1.1"/><path d="M16.9 11.6 L19.0 10.5 V17.1 M16.9 17.1 H21.8" fill="none" stroke="#9a9a9a" stroke-width="1.1"/><rect x="23.7" y="10.5" width="4.2" height="6.6" fill="none" stroke="#9a9a9a" stroke-width="1.1"/><rect x="30.3" y="10.5" width="4.2" height="6.6" fill="none" stroke="#9a9a9a" stroke-width="1.1"/><rect x="10.5" y="20.5" width="4.2" height="6.6" fill="none" stroke="#9a9a9a" stroke-width="1.1"/><rect x="17.1" y="20.5" width="4.2" height="6.6" fill="none" stroke="#9a9a9a" stroke-width="1.1"/><path d="M23.5 21.6 L25.6 20.5 V27.1 M23.5 27.1 H28.4" fill="none" stroke="#9a9a9a" stroke-width="1.1"/><rect x="30.3" y="20.5" width="4.2" height="6.6" fill="none" stroke="#9a9a9a" stroke-width="1.1"/><path d="M10.3 31.6 L12.4 30.5 V37.1 M10.3 37.1 H15.2" fill="none" stroke="#9a9a9a" stroke-width="1.1"/><rect x="17.1" y="30.5" width="4.2" height="6.6" fill="none" stroke="#9a9a9a" stroke-width="1.1"/><rect x="23.7" y="30.5" width="4.2" height="6.6" fill="none" stroke="#9a9a9a" stroke-width="1.1"/><path d="M30.1 31.6 L32.2 30.5 V37.1 M30.1 37.1 H35.0" fill="none" stroke="#9a9a9a" stroke-width="1.1"/><rect x="10.5" y="40.5" width="4.2" height="6.6" fill="none" stroke="#9a9a9a" stroke-width="1.1"/><path d="M16.9 41.6 L19.0 40.5 V47.1 M16.9 47.1 H21.8" fill="none" stroke="#9a9a9a" stroke-width="1.1"/><path d="M23.5 41.6 L25.6 40.5 V47.1 M23.5 47.1 H28.4" fill="none" stroke="#9a9a9a" stroke-width="1.1"/><rect x="30.3" y="40.5" width="4.2" height="6.6" fill="none" stroke="#9a9a9a" stroke-width="1.1"/></svg>
<div class="lbl" style="left:307.0px;top:330.4px">$LogFile</div>
<svg class="abs" style="left:461.4px;top:267.3px" width="46" height="58" viewBox="0 0 46 58"><rect x="0.5" y="0.5" width="45" height="57" rx="6" fill="#f3f3f3" stroke="#d9d9d9"/><rect x="10.5" y="10.5" width="4.2" height="6.6" fill="none" stroke="#9a9a9a" stroke-width="1.1"/><path d="M16.9 11.6 L19.0 10.5 V17.1 M16.9 17.1 H21.8" fill="none" stroke="#9a9a9a" stroke-width="1.1"/><rect x="23.7" y="10.5" width="4.2" height="6.6" fill="none" stroke="#9a9a9a" stroke-width="1.1"/><rect x="30.3" y="10.5" width="4.2" height="6.6" fill="none" stroke="#9a9a9a" stroke-width="1.1"/><rect x="10.5" y="20.5" width="4.2" height="6.6" fill="none" stroke="#9a9a9a" stroke-width="1.1"/><rect x="17.1" y="20.5" width="4.2" height="6.6" fill="none" stroke="#9a9a9a" stroke-width="1.1"/><path d="M23.5 21.6 L25.6 20.5 V27.1 M23.5 27.1 H28.4" fill="none" stroke="#9a9a9a" stroke-width="1.1"/><rect x="30.3" y="20.5" width="4.2" height="6.6" fill="none" stroke="#9a9a9a" stroke-width="1.1"/><path d="M10.3 31.6 L12.4 30.5 V37.1 M10.3 37.1 H15.2" fill="none" stroke="#9a9a9a" stroke-width="1.1"/><rect x="17.1" y="30.5" width="4.2" height="6.6" fill="none" stroke="#9a9a9a" stroke-width="1.1"/><rect x="23.7" y="30.5" width="4.2" height="6.6" fill="none" stroke="#9a9a9a" stroke-width="1.1"/><path d="M30.1 31.6 L32.2 30.5 V37.1 M30.1 37.1 H35.0" fill="none" stroke="#9a9a9a" stroke-width="1.1"/><rect x="10.5" y="40.5" width="4.2" height="6.6" fill="none" stroke="#9a9a9a" stroke-width="1.1"/><path d="M16.9 41.6 L19.0 40.5 V47.1 M16.9 47.1 H21.8" fill="none" stroke="#9a9a9a" stroke-width="1.1"/><path d="M23.5 41.6 L25.6 40.5 V47.1 M23.5 47.1 H28.4" fill="none" stroke="#9a9a9a" stroke-width="1.1"/><rect x="30.3" y="40.5" width="4.2" height="6.6" fill="none" stroke="#9a9a9a" stroke-width="1.1"/></svg>
<div class="lbl" style="left:424.0px;top:330.4px">$MFTMirr</div>
<svg class="abs" style="left:578.4px;top:267.3px" width="46" height="58" viewBox="0 0 46 58"><rect x="0.5" y="0.5" width="45" height="57" rx="6" fill="#f3f3f3" stroke="#d9d9d9"/><path d="M9.5 18.2 H37.5" stroke="#9c9c9c" stroke-width="1"/><path d="M9.5 21.2 H37.5" stroke="#9c9c9c" stroke-width="1"/><path d="M9.5 24.2 H37.5" stroke="#9c9c9c" stroke-width="1"/><path d="M9.5 27.2 H37.5" stroke="#9c9c9c" stroke-width="1"/><path d="M9.5 30.2 H37.5" stroke="#9c9c9c" stroke-width="1"/><path d="M9.5 33.2 H37.5" stroke="#9c9c9c" stroke-width="1"/><path d="M9.5 36.2 H37.5" stroke="#9c9c9c" stroke-width="1"/><path d="M9.5 39.3 H23.5" stroke="#9c9c9c" stroke-width="1"/></svg>
<div class="lbl" style="left:541.0px;top:330.4px">$Secure</div>
<svg class="abs" style="left:223.3px;top:366.9px" width="56" height="48" viewBox="0 0 56 48"><defs><clipPath id="ic"><rect x="0" y="0" width="55.4" height="47.7" rx="4.5"/></clipPath></defs><g clip-path="url(#ic)"><rect width="28" height="24" fill="#a93dbb"/><rect x="27.5" width="28" height="24" fill="#c45bc9"/><rect y="23.8" width="28" height="24" fill="#b950c3"/><rect x="27.5" y="23.8" width="28" height="24" fill="#cb6acd"/><path d="M55.4 35 V47.7 H42Z" fill="#d47ad6"/></g><path d="M11.7 38 L22.2 18.2 L27.1 26.7 L29.5 23.4 L36.7 38Z" fill="#e6b8ea"/><circle cx="38.4" cy="14.9" r="4.9" fill="#e6b8ea"/></svg>
<div class="lbl" style="left:191.0px;top:422.3px">$UpCase</div>
<svg class="abs" style="left:344.4px;top:360.4px" width="46" height="58" viewBox="0 0 46 58"><rect x="0.5" y="0.5" width="45" height="57" rx="6" fill="#f3f3f3" stroke="#d9d9d9"/><path d="M9.5 18.2 H37.5" stroke="#9c9c9c" stroke-width="1"/><path d="M9.5 21.2 H37.5" stroke="#9c9c9c" stroke-width="1"/><path d="M9.5 24.2 H37.5" stroke="#9c9c9c" stroke-width="1"/><path d="M9.5 27.2 H37.5" stroke="#9c9c9c" stroke-width="1"/><path d="M9.5 30.2 H37.5" stroke="#9c9c9c" stroke-width="1"/><path d="M9.5 33.2 H37.5" stroke="#9c9c9c" stroke-width="1"/><path d="M9.5 36.2 H37.5" stroke="#9c9c9c" stroke-width="1"/><path d="M9.5 39.3 H23.5" stroke="#9c9c9c" stroke-width="1"/></svg>
<div class="lbl" style="left:307.0px;top:422.3px">$Volume</div>
<svg class="abs" style="left:461.4px;top:360.4px" width="46" height="58" viewBox="0 0 46 58"><rect x="0.5" y="0.5" width="45" height="57" rx="6" fill="#f3f3f3" stroke="#d9d9d9"/><rect x="10.5" y="10.5" width="4.2" height="6.6" fill="none" stroke="#9a9a9a" stroke-width="1.1"/><path d="M16.9 11.6 L19.0 10.5 V17.1 M16.9 17.1 H21.8" fill="none" stroke="#9a9a9a" stroke-width="1.1"/><rect x="23.7" y="10.5" width="4.2" height="6.6" fill="none" stroke="#9a9a9a" stroke-width="1.1"/><rect x="30.3" y="10.5" width="4.2" height="6.6" fill="none" stroke="#9a9a9a" stroke-width="1.1"/><rect x="10.5" y="20.5" width="4.2" height="6.6" fill="none" stroke="#9a9a9a" stroke-width="1.1"/><rect x="17.1" y="20.5" width="4.2" height="6.6" fill="none" stroke="#9a9a9a" stroke-width="1.1"/><path d="M23.5 21.6 L25.6 20.5 V27.1 M23.5 27.1 H28.4" fill="none" stroke="#9a9a9a" stroke-width="1.1"/><rect x="30.3" y="20.5" width="4.2" height="6.6" fill="none" stroke="#9a9a9a" stroke-width="1.1"/><path d="M10.3 31.6 L12.4 30.5 V37.1 M10.3 37.1 H15.2" fill="none" stroke="#9a9a9a" stroke-width="1.1"/><rect x="17.1" y="30.5" width="4.2" height="6.6" fill="none" stroke="#9a9a9a" stroke-width="1.1"/><rect x="23.7" y="30.5" width="4.2" height="6.6" fill="none" stroke="#9a9a9a" stroke-width="1.1"/><path d="M30.1 31.6 L32.2 30.5 V37.1 M30.1 37.1 H35.0" fill="none" stroke="#9a9a9a" stroke-width="1.1"/><rect x="10.5" y="40.5" width="4.2" height="6.6" fill="none" stroke="#9a9a9a" stroke-width="1.1"/><path d="M16.9 41.6 L19.0 40.5 V47.1 M16.9 47.1 H21.8" fill="none" stroke="#9a9a9a" stroke-width="1.1"/><path d="M23.5 41.6 L25.6 40.5 V47.1 M23.5 47.1 H28.4" fill="none" stroke="#9a9a9a" stroke-width="1.1"/><rect x="30.3" y="40.5" width="4.2" height="6.6" fill="none" stroke="#9a9a9a" stroke-width="1.1"/></svg>
<div class="lbl" style="left:424.0px;top:422.3px">hiberfil.sys</div>
<svg class="abs" style="left:578.4px;top:360.4px" width="46" height="58" viewBox="0 0 46 58"><rect x="0.5" y="0.5" width="45" height="57" rx="6" fill="#f3f3f3" stroke="#d9d9d9"/><rect x="10.5" y="10.5" width="4.2" height="6.6" fill="none" stroke="#9a9a9a" stroke-width="1.1"/><path d="M16.9 11.6 L19.0 10.5 V17.1 M16.9 17.1 H21.8" fill="none" stroke="#9a9a9a" stroke-width="1.1"/><rect x="23.7" y="10.5" width="4.2" height="6.6" fill="none" stroke="#9a9a9a" stroke-width="1.1"/><rect x="30.3" y="10.5" width="4.2" height="6.6" fill="none" stroke="#9a9a9a" stroke-width="1.1"/><rect x="10.5" y="20.5" width="4.2" height="6.6" fill="none" stroke="#9a9a9a" stroke-width="1.1"/><rect x="17.1" y="20.5" width="4.2" height="6.6" fill="none" stroke="#9a9a9a" stroke-width="1.1"/><path d="M23.5 21.6 L25.6 20.5 V27.1 M23.5 27.1 H28.4" fill="none" stroke="#9a9a9a" stroke-width="1.1"/><rect x="30.3" y="20.5" width="4.2" height="6.6" fill="none" stroke="#9a9a9a" stroke-width="1.1"/><path d="M10.3 31.6 L12.4 30.5 V37.1 M10.3 37.1 H15.2" fill="none" stroke="#9a9a9a" stroke-width="1.1"/><rect x="17.1" y="30.5" width="4.2" height="6.6" fill="none" stroke="#9a9a9a" stroke-width="1.1"/><rect x="23.7" y="30.5" width="4.2" height="6.6" fill="none" stroke="#9a9a9a" stroke-width="1.1"/><path d="M30.1 31.6 L32.2 30.5 V37.1 M30.1 37.1 H35.0" fill="none" stroke="#9a9a9a" stroke-width="1.1"/><rect x="10.5" y="40.5" width="4.2" height="6.6" fill="none" stroke="#9a9a9a" stroke-width="1.1"/><path d="M16.9 41.6 L19.0 40.5 V47.1 M16.9 47.1 H21.8" fill="none" stroke="#9a9a9a" stroke-width="1.1"/><path d="M23.5 41.6 L25.6 40.5 V47.1 M23.5 47.1 H28.4" fill="none" stroke="#9a9a9a" stroke-width="1.1"/><rect x="30.3" y="40.5" width="4.2" height="6.6" fill="none" stroke="#9a9a9a" stroke-width="1.1"/></svg>
<div class="lbl" style="left:541.0px;top:422.3px">pagefile.sys</div>
</div>
<div id="side" class="abs">
<svg class="abs" style="left:13px;top:14px" width="16" height="16" viewBox="0 0 16 16"><path d="M2.2 5.2 A6.9 6.9 0 1 1 1.5 9.5" fill="none" stroke="#4a4a4a" stroke-width="1.1"/><path d="M0.6 2.8 L2.4 6.6 L5.6 4.4Z" fill="#4a4a4a"/><path d="M8 4.2 V8.6 L10 11" fill="none" stroke="#4a4a4a" stroke-width="1.1"/></svg>
<div class="abs" style="left:37.5px;top:14px;font-size:14px;color:#1a1a1a;white-space:pre;letter-spacing:0.5px;-webkit-text-stroke:0.1px #1a1a1a">Recent</div>
<svg class="abs" style="left:14px;top:52px" width="16" height="16" viewBox="0 0 16 16"><path d="M8 1.5 L9.9 6.2 L14.8 6.3 L11 9.4 L12.3 14.3 L8 11.5 L3.7 14.3 L5 9.4 L1.2 6.3 L6.1 6.2Z" fill="#4a4a4a"/></svg>
<div class="abs" style="left:37.5px;top:52px;font-size:14px;color:#1a1a1a;white-space:pre;letter-spacing:0.5px;-webkit-text-stroke:0.1px #1a1a1a">Starred</div>
<svg class="abs" style="left:14px;top:90px" width="16" height="16" viewBox="0 0 16 16"><path d="M1.5 8.5 L8 2 L14.5 8.5 M3.3 7 V14.5 H12.7 V7" fill="none" stroke="#4a4a4a" stroke-width="1.1"/><rect x="8.5" y="9" width="2.6" height="5.5" fill="#4a4a4a"/><path d="M12 2.5 V5" stroke="#4a4a4a" stroke-width="1.1"/></svg>
<div class="abs" style="left:37.5px;top:90px;font-size:14px;color:#1a1a1a;white-space:pre;letter-spacing:0.5px;-webkit-text-stroke:0.1px #1a1a1a">Home</div>
<svg class="abs" style="left:14px;top:128px" width="16" height="16" viewBox="0 0 16 16"><rect x="1.5" y="2.5" width="13" height="11" rx="1.5" fill="none" stroke="#4a4a4a" stroke-width="1.1"/><rect x="1.5" y="2.5" width="2.8" height="11" fill="#4a4a4a"/></svg>
<div class="abs" style="left:37.5px;top:128px;font-size:14px;color:#1a1a1a;white-space:pre;letter-spacing:0.5px;-webkit-text-stroke:0.1px #1a1a1a">Desktop</div>
<svg class="abs" style="left:14px;top:166px" width="16" height="16" viewBox="0 0 16 16"><path d="M2.5 1.5 H13.5 V11 L10 14.5 H2.5Z" fill="none" stroke="#4a4a4a" stroke-width="1.1"/><path d="M13.5 11 H10 V14.5Z" fill="#4a4a4a"/><path d="M4.5 4.5 H11.5 M4.5 6.7 H11.5 M4.5 8.9 H11.5 M4.5 11.1 H8" stroke="#4a4a4a" stroke-width="0.9"/></svg>
<div class="abs" style="left:37.5px;top:166px;font-size:14px;color:#1a1a1a;white-space:pre;letter-spacing:0.5px;-webkit-text-stroke:0.1px #1a1a1a">Documents</div>
<svg class="abs" style="left:14px;top:204px" width="16" height="16" viewBox="0 0 16 16"><path d="M6.3 1.5 H9.7 V7.5 H12 L8 12 L4 7.5 H6.3Z" fill="none" stroke="#4a4a4a" stroke-width="1.1"/><path d="M3 15 H13" stroke="#4a4a4a" stroke-width="1.1"/></svg>
<div class="abs" style="left:37.5px;top:204px;font-size:14px;color:#1a1a1a;white-space:pre;letter-spacing:0.5px;-webkit-text-stroke:0.1px #1a1a1a">Downloads</div>
<svg class="abs" style="left:14px;top:242px" width="16" height="16" viewBox="0 0 16 16"><path d="M5.5 13 V3 L13 1.8 V11" fill="none" stroke="#4a4a4a" stroke-width="1.4"/><ellipse cx="3.8" cy="13" rx="2.2" ry="1.9" fill="#4a4a4a"/><ellipse cx="11.3" cy="11" rx="2.2" ry="1.9" fill="#4a4a4a"/></svg>
<div class="abs" style="left:37.5px;top:242px;font-size:14px;color:#1a1a1a;white-space:pre;letter-spacing:0.5px;-webkit-text-stroke:0.1px #1a1a1a">Music</div>
<svg class="abs" style="left:14px;top:280px" width="16" height="16" viewBox="0 0 16 16"><rect x="1.5" y="2" width="13" height="12" fill="none" stroke="#4a4a4a" stroke-width="1.3"/><rect x="1.5" y="12.3" width="13" height="1.7" fill="#4a4a4a"/><path d="M3 12.3 L6.5 7.5 L8.5 10 L10 8.5 L12.5 12.3Z" fill="#4a4a4a"/><circle cx="11" cy="5" r="1.2" fill="#4a4a4a"/></svg>
<div class="abs" style="left:37.5px;top:280px;font-size:14px;color:#1a1a1a;white-space:pre;letter-spacing:0.5px;-webkit-text-stroke:0.1px #1a1a1a">Pictures</div>
<svg class="abs" style="left:14px;top:318px" width="16" height="16" viewBox="0 0 16 16"><rect x="1.5" y="2" width="13" height="12" fill="none" stroke="#4a4a4a" stroke-width="1.1"/><path d="M4.3 2 V14 M11.7 2 V14 M4.3 8 H11.7" stroke="#4a4a4a" stroke-width="1.1"/><path d="M1.5 4.5 H4.3 M1.5 7 H4.3 M1.5 9.5 H4.3 M1.5 12 H4.3 M11.7 4.5 H14.5 M11.7 7 H14.5 M11.7 9.5 H14.5 M11.7 12 H14.5" stroke="#4a4a4a" stroke-width="0.9"/></svg>
<div class="abs" style="left:37.5px;top:318px;font-size:14px;color:#1a1a1a;white-space:pre;letter-spacing:0.5px;-webkit-text-stroke:0.1px #1a1a1a">Videos</div>
<svg class="abs" style="left:14px;top:356px" width="16" height="16" viewBox="0 0 16 16"><path d="M2 4 H14 M6 4 V2 H10 V4" fill="none" stroke="#4a4a4a" stroke-width="1.2"/><path d="M3.3 5 L4 14.5 H12 L12.7 5" fill="none" stroke="#4a4a4a" stroke-width="1.1"/><path d="M6.2 6.5 V13 M8 6.5 V13 M9.8 6.5 V13" stroke="#4a4a4a" stroke-width="0.9"/></svg>
<div class="abs" style="left:37.5px;top:356px;font-size:14px;color:#1a1a1a;white-space:pre;letter-spacing:0.5px;-webkit-text-stroke:0.1px #1a1a1a">Trash</div>
<svg class="abs" style="left:14px;top:394px" width="16" height="16" viewBox="0 0 16 16"><path d="M1.5 3.5 Q1.5 2 3 2 H6 Q7 2 7.5 3 H13.5 Q15 3 15 4.5 V12.5 Q15 14 13.5 14 H3 Q1.5 14 1.5 12.5Z M1.5 5.5 H6.5 Q7.5 5.5 7.5 4" fill="none" stroke="#4a4a4a" stroke-width="1.1"/><path d="M7.5 14 L8 15 L8.5 14" fill="#4a4a4a"/></svg>
<div class="abs" style="left:37.5px;top:394px;font-size:14px;color:#1a1a1a;white-space:pre;letter-spacing:0.5px;-webkit-text-stroke:0.1px #1a1a1a">sf_Images_DD</div>
<div class="abs" style="left:146.5px;top:388.5px;width:27px;height:27px;border-radius:50%;border:1px solid #dadada"></div>
<svg class="abs" style="left:153px;top:395px" width="14" height="14" viewBox="0 0 14 14"><path d="M7 2.5 L12 8 H2Z M2 9.8 H12 V11.3 H2Z" fill="#555"/></svg>
</div>
</div>
</body></html>
